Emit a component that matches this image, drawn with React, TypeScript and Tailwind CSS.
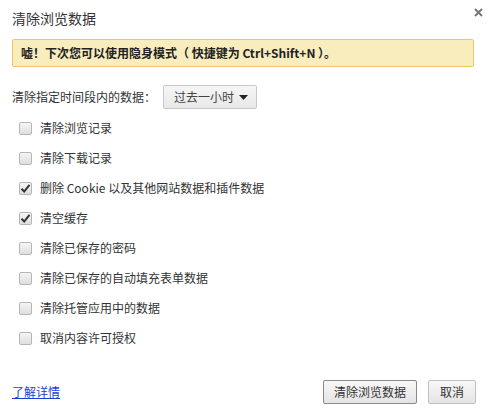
import { useState } from "react";

const font = { fontFamily: '"Noto Sans CJK SC", "Noto Sans", sans-serif' };

const items = [
  { label: "清除浏览记录", checked: false },
  { label: "清除下载记录", checked: false },
  { label: "删除 Cookie 以及其他网站数据和插件数据", checked: true },
  { label: "清空缓存", checked: true },
  { label: "清除已保存的密码", checked: false },
  { label: "清除已保存的自动填充表单数据", checked: false },
  { label: "清除托管应用中的数据", checked: false },
  { label: "取消内容许可授权", checked: false },
];

function CheckRow({ label, checked }: { label: string; checked: boolean }) {
  const [on, setOn] = useState(checked);
  return (
    <label className="flex items-center h-[30px] pl-[19px] gap-[8px] cursor-default" onClick={() => setOn(!on)}>
      <span className="w-[13px] h-[13px] rounded-[2px] border border-[#b5b5b5] bg-gradient-to-b from-[#f5f5f5] to-[#dedede] flex items-center justify-center">
        {on && (
          <svg width="11" height="11" viewBox="0 0 11 11">
            <path d="M1.5 5.8 L4.2 8.5 L9.5 1.8" fill="none" stroke="#333" strokeWidth="2" />
          </svg>
        )}
      </span>
      <span className="text-[12px] text-[#333]">{label}</span>
    </label>
  );
}

export default function App() {
  return (
    <div className="w-[491px] h-[408px] bg-white relative" style={font}>
      <button className="absolute right-[6px] top-[5px] w-[14px] h-[14px] flex items-center justify-center">
        <svg width="9" height="9" viewBox="0 0 9 9">
          <path d="M1 1 L8 8 M8 1 L1 8" stroke="#777" strokeWidth="2" />
        </svg>
      </button>
      <div className="pt-[8px] pl-[12px] text-[14px] text-[#333] h-[31px] leading-[20px]">清除浏览数据</div>
      <div className="mx-[12px] mt-[8px] w-[462px] h-[28px] bg-[#f9edbe] border border-[#f0c36d] rounded-[2px] flex items-center pl-[8px] text-[12px] font-bold text-[#222]">
        嘘！下次您可以使用隐身模式（ 快捷键为 Ctrl+Shift+N ）。
      </div>
      <div className="flex items-center pl-[12px] mt-[17px] h-[26px] gap-[7px]">
        <span className="text-[12px] text-[#333]">清除指定时间段内的数据：</span>
        <div className="w-[94px] h-[24px] border border-[#c8c8c8] rounded-[2px] bg-gradient-to-b from-[#f6f6f6] to-[#e8e8e8] flex items-center justify-between pl-[10px] pr-[8px]">
          <span className="text-[12px] text-[#444]">过去一小时</span>
          <svg width="9" height="5" viewBox="0 0 9 5">
            <path d="M0 0 L9 0 L4.5 5 Z" fill="#222" />
          </svg>
        </div>
      </div>
      <div className="mt-[3px] flex flex-col">
        {items.map((it) => (
          <CheckRow key={it.label} label={it.label} checked={it.checked} />
        ))}
      </div>
      <div className="flex items-center justify-between px-[12px] mt-[27px]">
        <a href="#" className="text-[12px] text-[#1a3fd6] underline">了解详情</a>
        <div className="flex gap-[11px] pr-[3px]">
          <button className="w-[94px] h-[24px] border border-[#8a8a8a] rounded-[2px] bg-gradient-to-b from-[#f8f8f8] to-[#e4e4e4] text-[12px] text-[#333]">清除浏览数据</button>
          <button className="w-[48px] h-[24px] border border-[#c0c0c0] rounded-[2px] bg-gradient-to-b from-[#f8f8f8] to-[#e4e4e4] text-[12px] text-[#333]">取消</button>
        </div>
      </div>
    </div>
  );
}
